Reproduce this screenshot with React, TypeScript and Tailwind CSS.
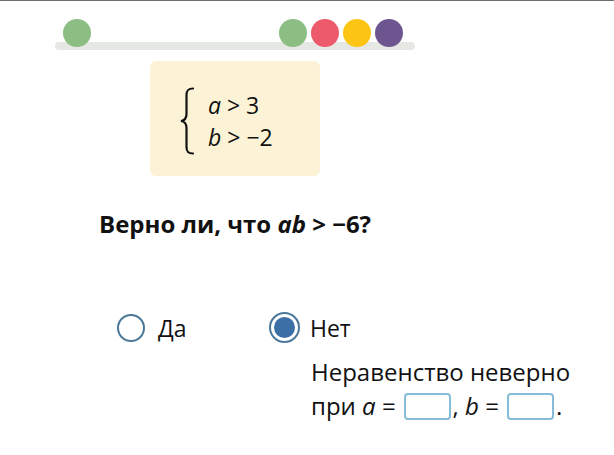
import React from 'react';

const Dot: React.FC<{ color: string }> = ({ color }) => (
  <div className={`w-[28px] h-[28px] rounded-full ${color}`} />
);

const Brace: React.FC = () => (
  <svg width="16" height="68" viewBox="0 0 16 68" className="shrink-0">
    <path
      d="M14 1.5 C9 1.5 7.5 3.5 7.5 8 L7.5 27 C7.5 31 5.5 33.5 2 34 C5.5 34.5 7.5 37 7.5 41 L7.5 60 C7.5 64.5 9 66.5 14 66.5"
      fill="none"
      stroke="#111"
      strokeWidth="2.2"
      strokeLinecap="round"
    />
  </svg>
);

const AnswerBox: React.FC = () => (
  <span className="inline-block align-middle w-[47px] h-[27px] ml-[8px] mr-[2px] rounded-[4px] border-2 border-[#86bcd8] bg-white -translate-y-[2px]" />
);

const App: React.FC = () => {
  return (
    <div className="w-[614px] h-[455px] bg-white border-t border-[#6f6f6f] text-[#111] font-['Open_Sans',sans-serif] overflow-hidden">
      <div className="ml-[55px] mt-[18px] w-[360px]">
        <div className="relative z-10 flex pl-[8px]">
          <Dot color="bg-[#8cbd82]" />
          <div className="ml-[188px] flex gap-[4px]">
            <Dot color="bg-[#8cbd82]" />
            <Dot color="bg-[#ec5a6b]" />
            <Dot color="bg-[#fdc513]" />
            <Dot color="bg-[#6d5590]" />
          </div>
        </div>
        <div className="-mt-[5px] h-[8px] rounded-full bg-[#e5e8e3]" />
      </div>

      <div className="ml-[150px] mt-[11px] w-[170px] h-[115px] rounded-[6px] bg-[#fcf3d7] flex items-center pl-[29px] gap-[13px] pt-[4px]">
        <Brace />
        <div className="text-[23px] leading-[32px]">
          <div>
            <i>a</i> &gt; 3
          </div>
          <div>
            <i>b</i> &gt; −2
          </div>
        </div>
      </div>

      <div className="ml-[99px] mt-[34px] text-[24px] font-bold leading-[28px]">
        Верно ли, что <i>ab</i> &gt; −6?
      </div>

      <div className="ml-[117px] mt-[74px] flex items-center text-[23px] leading-[30px]">
        <div className="w-[152px] flex items-center gap-[13px]">
          <div className="w-[28px] h-[28px] rounded-full border-2 border-[#4b7898] bg-white" />
          <span>Да</span>
        </div>
        <div className="flex items-center gap-[10px]">
          <div className="w-[31px] h-[31px] rounded-full border-2 border-[#4a7799] bg-white flex items-center justify-center">
            <div className="w-[21px] h-[21px] rounded-full bg-[#3b6fa5]" />
          </div>
          <span>Нет</span>
        </div>
      </div>

      <div className="ml-[311px] mt-[12px] text-[24px] leading-[34px]">
        <div>Неравенство неверно</div>
        <div>
          при <i>a</i> =<AnswerBox />, <i>b</i> =<AnswerBox />.
        </div>
      </div>
    </div>
  );
};

export default App;
